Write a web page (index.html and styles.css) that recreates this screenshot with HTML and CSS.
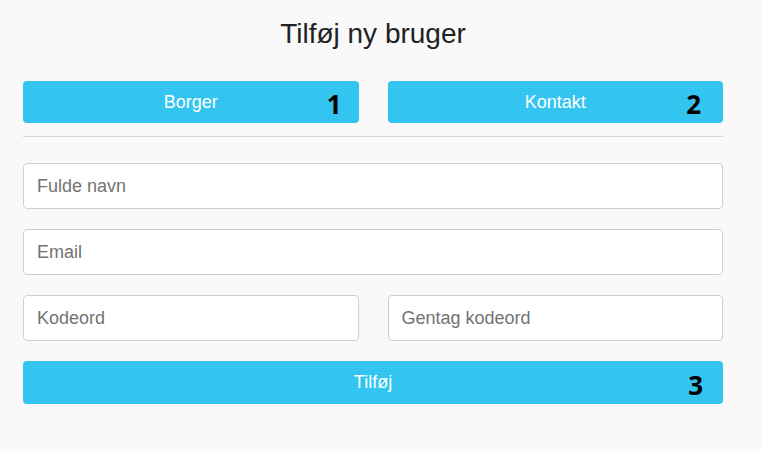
FILE: index.html
```html
<!DOCTYPE html>
<html lang="da">
<head>
<meta charset="utf-8">
<title>Tilføj ny bruger</title>
<link rel="stylesheet" href="styles.css">
</head>
<body>
<main class="page">
  <h1 class="title">Tilføj ny bruger</h1>
  <div class="tabs">
    <button class="btn tab">Borger<span class="num num-1">1</span></button>
    <button class="btn tab">Kontakt<span class="num num-2">2</span></button>
  </div>
  <hr class="divider">
  <form class="form">
    <input class="field" type="text" placeholder="Fulde navn">
    <input class="field" type="email" placeholder="Email">
    <div class="pair">
      <input class="field" type="password" placeholder="Kodeord">
      <input class="field" type="password" placeholder="Gentag kodeord">
    </div>
    <button class="btn submit" type="button">Tilføj<span class="num num-3">3</span></button>
  </form>
</main>
</body>
</html>
```
FILE: styles.css
```css
* { box-sizing: border-box; }
html, body { margin: 0; padding: 0; }
body {
  background: #f9f9f9;
  font-family: "Liberation Sans", Arial, sans-serif;
  color: #222;
  width: 762px;
  height: 451px;
  overflow: hidden;
}
.page {
  width: 700px;
  margin-left: 23px;
  padding-top: 18px;
}
.title {
  margin: 0;
  font-size: 28px;
  font-weight: 400;
  line-height: 32px;
  text-align: center;
  color: #222;
}
.tabs {
  margin-top: 31px;
  display: grid;
  grid-template-columns: 1fr 1fr;
  column-gap: 29px;
}
.btn {
  position: relative;
  display: block;
  border: none;
  border-radius: 4px;
  background: #34c4f0;
  color: #fff;
  font-family: "Liberation Sans", Arial, sans-serif;
  font-size: 18px;
  height: 42px;
  padding: 0;
  text-align: center;
  cursor: pointer;
}
.num {
  position: absolute;
  top: 50%;
  transform: translateY(-50%);
  margin-top: 2px;
  font-family: "Open Sans", sans-serif;
  font-weight: 700;
  font-size: 26px;
  line-height: 1;
  color: #000;
}
.num-1 { right: 17px; }
.num-2 { right: 22px; }
.num-3 { right: 20px; }
.divider {
  margin: 13px 0 0 0;
  border: none;
  border-top: 1px solid #d6d6d6;
  height: 0;
}
.form {
  margin-top: 26px;
  display: flex;
  flex-direction: column;
  gap: 20px;
}
.field {
  display: block;
  width: 100%;
  height: 46px;
  border: 1px solid #cfcfcf;
  border-radius: 4px;
  background: #fff;
  padding: 0 13px;
  font-family: "Liberation Sans", Arial, sans-serif;
  font-size: 18px;
  color: #333;
}
.field::placeholder { color: #737373; }
.pair {
  display: grid;
  grid-template-columns: 1fr 1fr;
  column-gap: 29px;
}
.submit {
  width: 100%;
  height: 43px;
}
```
